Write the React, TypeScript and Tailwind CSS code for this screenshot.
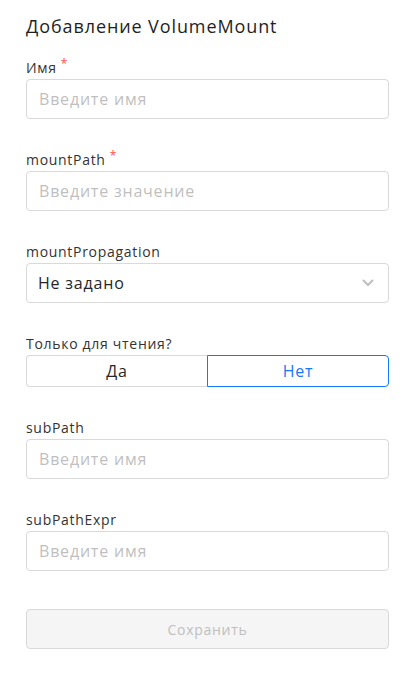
import React from "react";

const font = { fontFamily: '"Open Sans", "Noto Sans", sans-serif' };

function Label({ text, required }: { text: string; required?: boolean }) {
  return (
    <div className="h-[22px] flex items-center text-[14px] text-[#333333] leading-[22px] tracking-[0.05em]">
      <span>{text}</span>
      {required && <span className="ml-[4px] text-[#ff4d4f] text-[12px] leading-[12px] -mt-[8px]">*</span>}
    </div>
  );
}

function TextInput({ placeholder }: { placeholder: string }) {
  return (
    <div className="h-[40px] w-full rounded-[4px] border border-[#d9d9d9] bg-white flex items-center px-[12px]">
      <span className="text-[16px] text-[#bfbfbf] tracking-[0.05em]">{placeholder}</span>
    </div>
  );
}

export default function App() {
  return (
    <div className="w-[420px] h-[674px] bg-white" style={font}>
      <div className="pl-[26px] pr-[31px] pt-[13px] flex flex-col">
        <div className="h-[26px] text-[18px] leading-[26px] font-medium text-[#1f1f1f] tracking-[0.05em]">Добавление VolumeMount</div>
        <div className="mt-[18px]">
          <Label text="Имя" required />
          <TextInput placeholder="Введите имя" />
        </div>
        <div className="mt-[30px]">
          <Label text="mountPath" required />
          <TextInput placeholder="Введите значение" />
        </div>
        <div className="mt-[30px]">
          <Label text="mountPropagation" />
          <div className="h-[40px] w-full rounded-[4px] border border-[#d9d9d9] bg-white flex items-center justify-between pl-[11px] pr-[14px]">
            <span className="text-[16px] text-[#262626] tracking-[0.05em]">Не задано</span>
            <svg width="12" height="8" viewBox="0 0 12 8" fill="none">
              <path d="M1.5 1.5L6 6L10.5 1.5" stroke="#bfbfbf" strokeWidth="2" strokeLinecap="round" strokeLinejoin="round" />
            </svg>
          </div>
        </div>
        <div className="mt-[30px]">
          <Label text="Только для чтения?" />
          <div className="h-[32px] w-full flex tracking-[0.05em]">
            <div className="flex-1 h-full border border-[#d9d9d9] border-r-0 rounded-l-[4px] flex items-center justify-center text-[16px] text-[#262626]">
              Да
            </div>
            <div className="flex-1 h-full border border-[#1677ff] rounded-r-[4px] flex items-center justify-center text-[16px] text-[#1677ff]">
              Нет
            </div>
          </div>
        </div>
        <div className="mt-[30px]">
          <Label text="subPath" />
          <TextInput placeholder="Введите имя" />
        </div>
        <div className="mt-[30px]">
          <Label text="subPathExpr" />
          <TextInput placeholder="Введите имя" />
        </div>
        <div className="mt-[38px] h-[40px] w-full rounded-[4px] border border-[#d9d9d9] bg-[#f5f5f5] flex items-center justify-center text-[14px] text-[#bfbfbf] tracking-[0.05em]">
          Сохранить
        </div>
      </div>
    </div>
  );
}
